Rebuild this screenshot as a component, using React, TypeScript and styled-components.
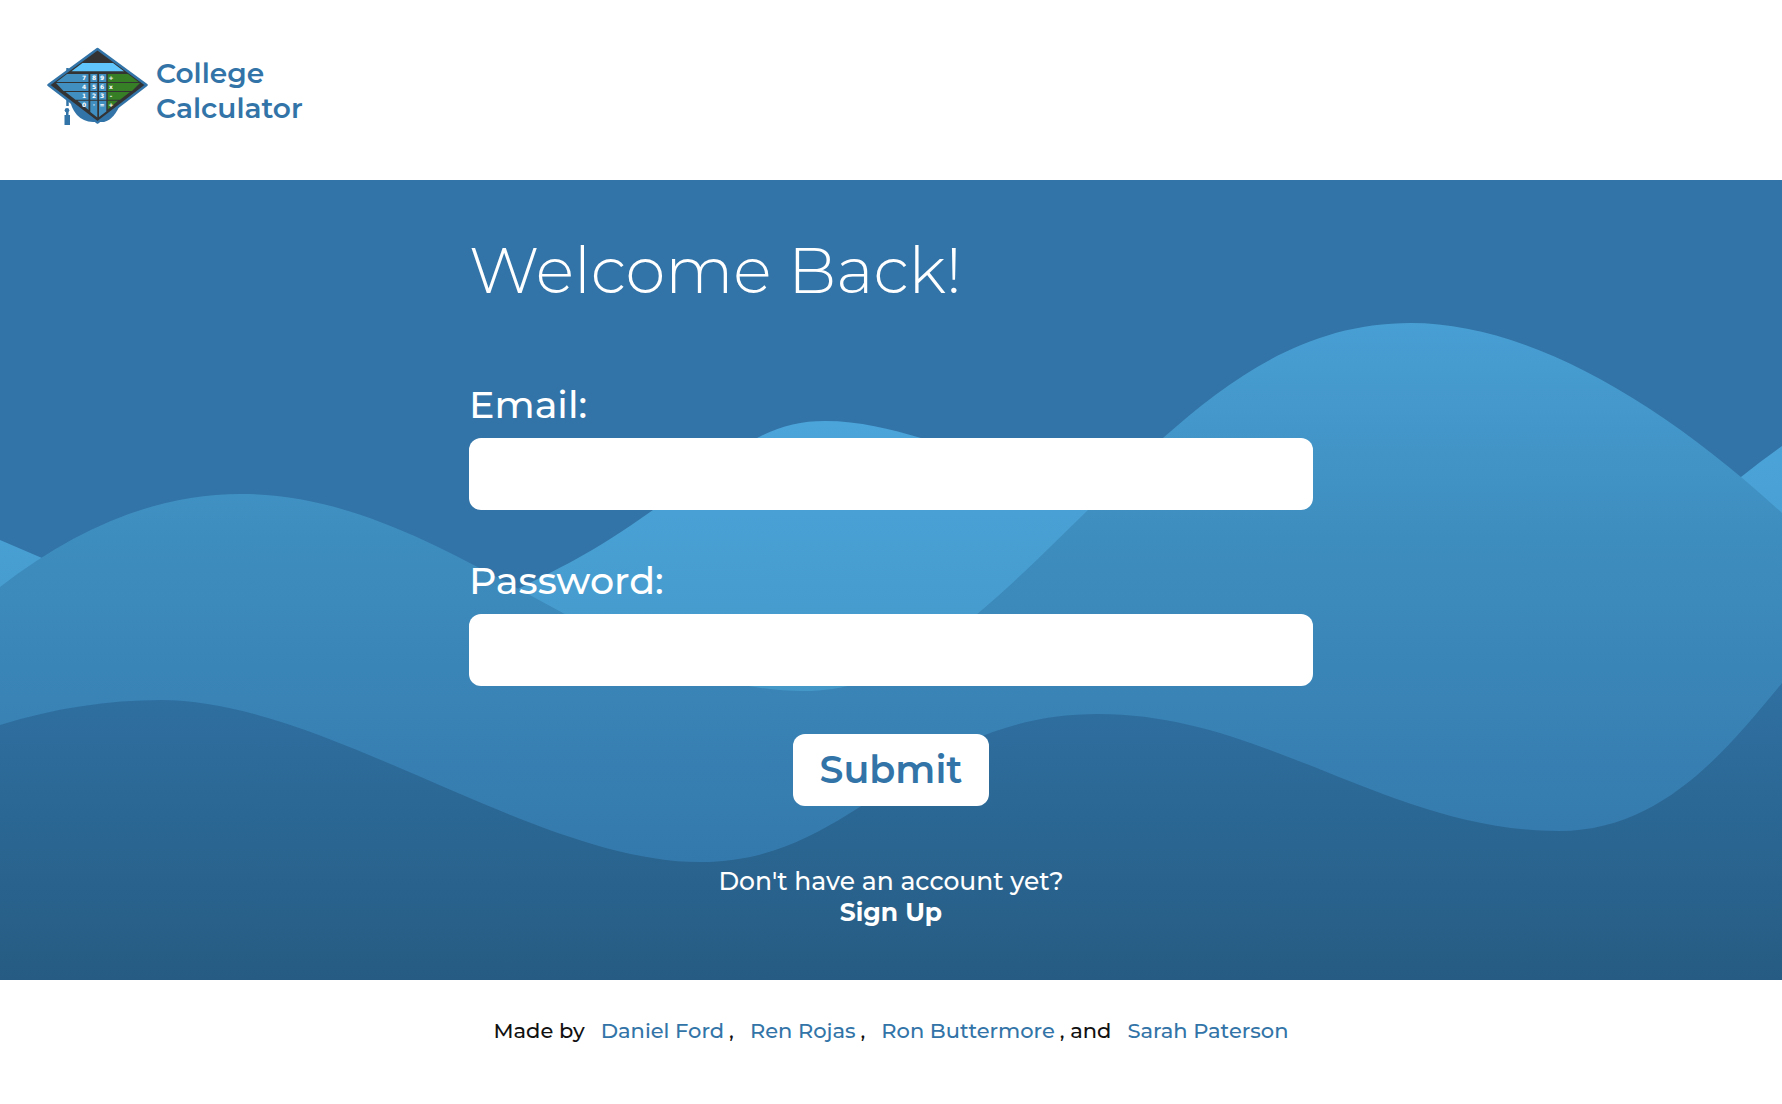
import React from "react";
import styled, { createGlobalStyle } from "styled-components";

const BLUE = "#3274a7";

const GlobalStyle = createGlobalStyle`
  *, *::before, *::after { box-sizing: border-box; }
  body {
    margin: 0;
    background: #fff;
    color: #111;
    font-family: Montserrat, Inter, "Open Sans", sans-serif;
  }
`;

const Page = styled.div`
  min-height: 100vh;
  display: flex;
  flex-direction: column;
`;

const Header = styled.header`
  display: flex;
  align-items: center;
  padding: 46px 46px 52px;
`;

const Brand = styled.a`
  display: flex;
  align-items: center;
  gap: 6px;
  color: ${BLUE};
  font-size: 28px;
  font-weight: 600;
  line-height: 35px;
  text-decoration: none;
`;

const BrandMark = styled.svg`
  display: block;
  width: 104px;
  height: 82px;
`;

const BrandName = styled.span`
  padding-top: 8px;
`;

const Main = styled.main`
  position: relative;
  flex: 1;
  display: flex;
  justify-content: center;
  background: ${BLUE};
  color: #fff;
  padding: 48px 24px 52px;
`;

const WaveArt = styled.svg`
  position: absolute;
  inset: 0;
  width: 100%;
  height: 100%;
`;

const Form = styled.form`
  position: relative;
  width: 844px;
  max-width: 100%;
  display: flex;
  flex-direction: column;
  align-items: center;
`;

const Title = styled.h1`
  align-self: flex-start;
  margin: 0 0 70px;
  font-size: 64px;
  font-weight: 300;
  line-height: 84px;
`;

const Field = styled.div`
  width: 100%;
  display: flex;
  flex-direction: column;
  gap: 10px;
  margin-bottom: 48px;
`;

const Label = styled.label`
  font-size: 38px;
  font-weight: 500;
  line-height: 46px;
`;

const Input = styled.input`
  width: 100%;
  height: 72px;
  border: 0;
  border-radius: 12px;
  padding: 0 27px;
  background: #fff;
  color: ${BLUE};
  font: inherit;
  font-size: 28px;
`;

const SubmitButton = styled.button`
  height: 72px;
  border: 0;
  border-radius: 12px;
  padding: 0 27px;
  background: #fff;
  color: ${BLUE};
  font: inherit;
  font-size: 38px;
  font-weight: 600;
  line-height: 46px;
  cursor: pointer;
`;

const SignUp = styled.p`
  margin: 60px 0 0;
  display: flex;
  flex-direction: column;
  align-items: center;
  font-size: 25px;
  font-weight: 500;
  line-height: 31px;
`;

const SignUpLink = styled.a`
  color: inherit;
  font-weight: 700;
  text-decoration: none;
`;

const Footer = styled.footer`
  display: flex;
  justify-content: center;
  align-items: center;
  height: 124px;
  padding-bottom: 22px;
  font-size: 21px;
  font-weight: 500;
  line-height: 26px;
`;

const Author = styled.a`
  margin: 0 5px 0 16px;
  color: ${BLUE};
  text-decoration: none;

  &:last-child {
    margin-right: 0;
  }
`;

const KEYS = [
  ["7", "8", "9", "÷"],
  ["4", "5", "6", "x"],
  ["1", "2", "3", "-"],
  ["0", "·", "=", "+"],
];
const KEY_X = [38, 48, 56, 65];
const KEY_Y = [34, 43, 52, 61];

function Logo() {
  return (
    <BrandMark viewBox="0 0 104 82" aria-hidden="true">
      <path d="M23 50 Q27 75 47 76 H58 Q69 73 75 56Z" fill={BLUE} />
      <path d="M21.500 22 V60" stroke={BLUE} strokeWidth="2.5" />
      <circle cx="21" cy="64.300" r="2.300" fill={BLUE} />
      <path d="M20 66 H22.500 V69 H24 V79 H18.500 V69 H20Z" fill={BLUE} />
      <path
        d="M51.500 3 L100.500 39 L51.500 76.500 L2.500 39Z"
        fill="#333"
        stroke={BLUE}
        strokeWidth="2.600"
        strokeLinejoin="round"
      />
      <path d="M36.500 17 H67 L78 25.300 H25.500Z" fill="#5fc5fb" />
      <path
        d="M21 28 H42.500 V36 H10.500Z M10 37 H42.500 V45 H17.500Z M19.500 46 H42.500 V53.700 H29.500Z M31.500 54.700 H42.500 V64Z"
        fill="#408fc0"
      />
      <path
        d="M44.300 28 H51.300 V36 H44.300Z M53 28 H60.300 V36 H53Z M44.300 37 H51.300 V45 H44.300Z M53 37 H60.300 V45 H53Z M44.300 46 H51.300 V53.700 H44.300Z M53 46 H60.300 V53.700 H53Z M44.300 54.700 H51.300 V71.500 L44.300 66Z M53 54.700 H60.300 V65.500 L53 71Z"
        fill="#408fc0"
      />
      <path
        d="M61.700 28 H82 L92.500 36 H61.700Z M61.700 37 H94 L86 45 H61.700Z M61.700 46 H84 L74 53.700 H61.700Z M61.700 54.700 H72 L61.700 63.500Z"
        fill="#367f27"
      />
      <g fill="#fff" fontSize="6" fontWeight="700" textAnchor="middle" fontFamily="DejaVu Sans, sans-serif">
        {KEYS.map((row, r) =>
          row.map((key, c) => (
            <text key={key} x={KEY_X[c]} y={KEY_Y[r]}>
              {key}
            </text>
          ))
        )}
      </g>
    </BrandMark>
  );
}

function Waves() {
  return (
    <WaveArt viewBox="0 0 1782 800" preserveAspectRatio="none" aria-hidden="true">
      <defs>
        <linearGradient id="back" gradientUnits="userSpaceOnUse" x1="0" y1="240" x2="0" y2="520">
          <stop offset="0" stopColor="#4ba4da" />
          <stop offset="1" stopColor="#4498c8" />
        </linearGradient>
        <linearGradient id="middle" gradientUnits="userSpaceOnUse" x1="0" y1="142" x2="0" y2="682">
          <stop offset="0" stopColor="#489fd3" />
          <stop offset="0.4" stopColor="#3e8dbf" />
          <stop offset="1" stopColor="#3479ac" />
        </linearGradient>
        <linearGradient id="front" gradientUnits="userSpaceOnUse" x1="0" y1="500" x2="0" y2="800">
          <stop offset="0" stopColor="#2f70a2" />
          <stop offset="1" stopColor="#265c83" />
        </linearGradient>
      </defs>
      <path
        fill="url(#back)"
        d="M0 360 L42 378 C200 490 400 470 520 408 C557 389 590 375 653 330 C690 303 720 275 757 258 C780 246 800 241 825 241 C860 241 890 249 921 258 C980 275 1080 310 1200 400 C1400 470 1650 380 1741 297 Q1762 280 1782 266 V800 H0Z"
      />
      <path
        fill="url(#middle)"
        d="M0 407 C80 345 160 314 241 314 C446 314 606 511 804 511 C930 511 1020 390 1163 258 C1235 194 1310 143 1411 143 C1520 143 1650 212 1782 333 V800 H0Z"
      />
      <path
        fill="url(#front)"
        d="M0 545 C55 528 108 520 161 520 C325 520 535 682 700 682 C860 682 910 534 1099 534 C1265 534 1390 651 1559 651 C1665 651 1730 565 1782 503 V800 H0Z"
      />
    </WaveArt>
  );
}

export default function App() {
  return (
    <Page>
      <GlobalStyle />
      <Header>
        <Brand href="#">
          <Logo />
          <BrandName>
            College
            <br />
            Calculator
          </BrandName>
        </Brand>
      </Header>
      <Main>
        <Waves />
        <Form onSubmit={(event) => event.preventDefault()}>
          <Title>Welcome Back!</Title>
          <Field>
            <Label htmlFor="email">Email:</Label>
            <Input id="email" type="email" />
          </Field>
          <Field>
            <Label htmlFor="password">Password:</Label>
            <Input id="password" type="password" />
          </Field>
          <SubmitButton type="submit">Submit</SubmitButton>
          <SignUp>
            Don't have an account yet?
            <SignUpLink href="#">Sign Up</SignUpLink>
          </SignUp>
        </Form>
      </Main>
      <Footer>
        <span>Made by</span>
        <Author href="#">Daniel Ford</Author>
        <span>,</span>
        <Author href="#">Ren Rojas</Author>
        <span>,</span>
        <Author href="#">Ron Buttermore</Author>
        <span>, and</span>
        <Author href="#">Sarah Paterson</Author>
      </Footer>
    </Page>
  );
}
